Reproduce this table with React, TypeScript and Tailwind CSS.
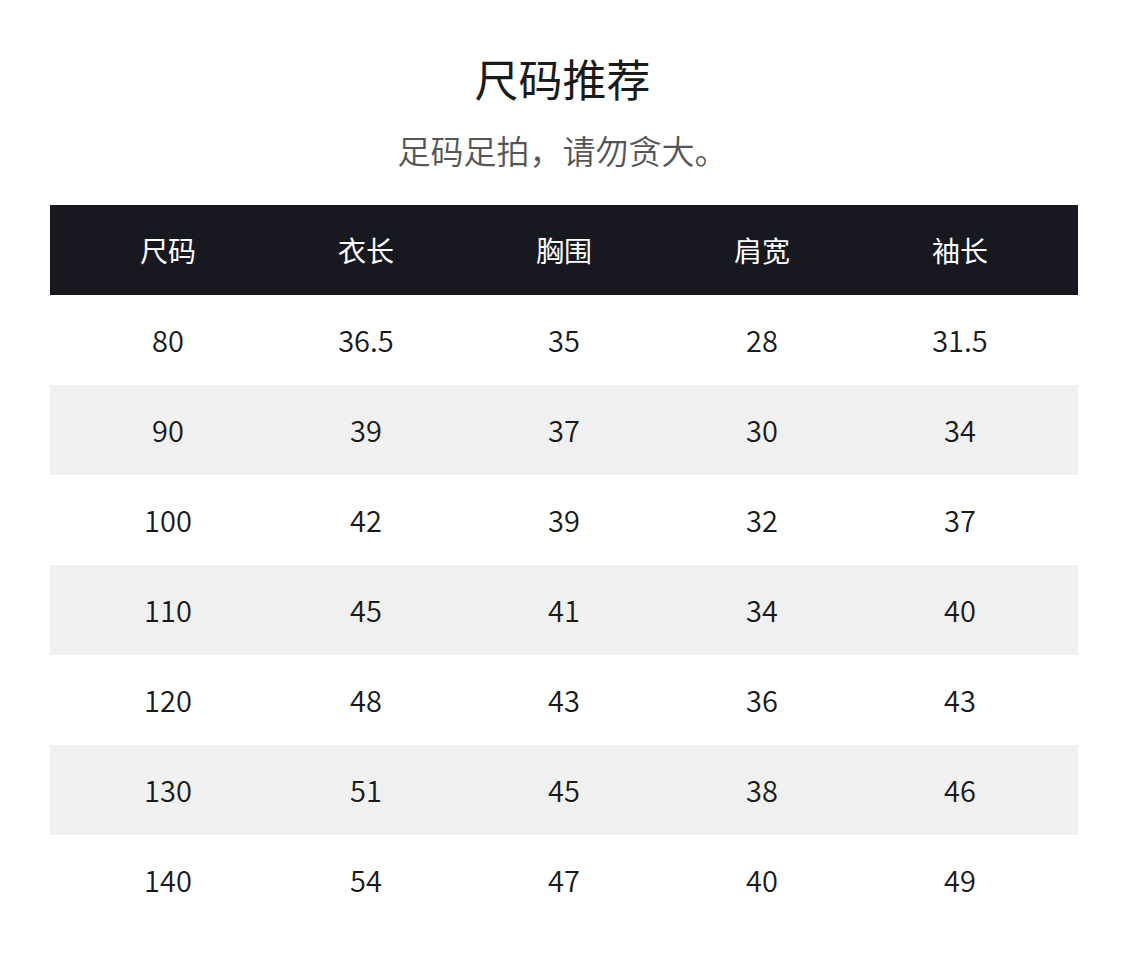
import React from "react"

const headers = ["尺码", "衣长", "胸围", "肩宽", "袖长"]

const rows = [
  ["80", "36.5", "35", "28", "31.5"],
  ["90", "39", "37", "30", "34"],
  ["100", "42", "39", "32", "37"],
  ["110", "45", "41", "34", "40"],
  ["120", "48", "43", "36", "43"],
  ["130", "51", "45", "38", "46"],
  ["140", "54", "47", "40", "49"],
]

const App = () => {
  return (
    <div className="w-[1125px] h-[972px] bg-white font-['Noto_Sans_CJK_SC',sans-serif] font-[350] text-[#1a1a1a]">
      <div className="pt-[56px] text-center">
        <h1 className="text-[44px] leading-[44px] font-normal">尺码推荐</h1>
        <p className="mt-[34px] text-[33px] leading-[32px] text-[#555555]">足码足拍，请勿贪大。</p>
      </div>
      <div className="ml-[50px] mr-[47px] mt-[39px]">
        <div className="grid grid-cols-5 h-[90px] items-center px-[19px] bg-[#181820] text-white text-[28px] font-normal">
          {headers.map((h) => (
            <div key={h} className="text-center">
              {h}
            </div>
          ))}
        </div>
        {rows.map((r, i) => (
          <div
            key={r[0]}
            className={
              i % 2 === 1
                ? "grid grid-cols-5 h-[90px] items-center px-[19px] bg-[#f0f0f0] text-[29px]"
                : "grid grid-cols-5 h-[90px] items-center px-[19px] bg-white text-[29px]"
            }
          >
            {r.map((c, j) => (
              <div key={j} className="text-center">
                {c}
              </div>
            ))}
          </div>
        ))}
      </div>
    </div>
  )
}

export default App
